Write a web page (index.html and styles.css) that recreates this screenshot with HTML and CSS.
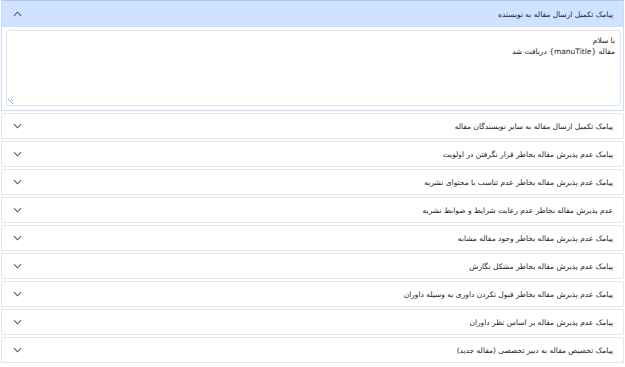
FILE: index.html
```html
<!DOCTYPE html>
<html lang="fa" dir="rtl">
<head>
<meta charset="utf-8">
<link rel="stylesheet" href="styles.css">
</head>
<body>
<div class="accordion">
  <div class="item open">
    <div class="head">
      <span class="title">پیامک تکمیل ارسال مقاله به نویسنده</span>
      <svg class="chev" viewBox="0 0 10 6" width="9" height="6"><path d="M1 5 L5 1 L9 5" fill="none" stroke="#3d5a80" stroke-width="1.2"/></svg>
    </div>
    <div class="body">
      <div class="textarea">با سلام<br>مقاله {manuTitle} دریافت شد<span class="grip"></span></div>
    </div>
  </div>
  <div class="item"><div class="head"><span class="title">پیامک تکمیل ارسال مقاله به سایر نویسندگان مقاله</span><svg class="chev" viewBox="0 0 10 6" width="9" height="6"><path d="M1 1 L5 5 L9 1" fill="none" stroke="#555" stroke-width="1.2"/></svg></div></div>
  <div class="item"><div class="head"><span class="title">پیامک عدم پذیرش مقاله بخاطر قرار نگرفتن در اولویت</span><svg class="chev" viewBox="0 0 10 6" width="9" height="6"><path d="M1 1 L5 5 L9 1" fill="none" stroke="#555" stroke-width="1.2"/></svg></div></div>
  <div class="item"><div class="head"><span class="title">پیامک عدم پذیرش مقاله بخاطر عدم تناسب با محتوای نشریه</span><svg class="chev" viewBox="0 0 10 6" width="9" height="6"><path d="M1 1 L5 5 L9 1" fill="none" stroke="#555" stroke-width="1.2"/></svg></div></div>
  <div class="item"><div class="head"><span class="title">عدم پذیرش مقاله بخاطر عدم رعایت شرایط و ضوابط نشریه</span><svg class="chev" viewBox="0 0 10 6" width="9" height="6"><path d="M1 1 L5 5 L9 1" fill="none" stroke="#555" stroke-width="1.2"/></svg></div></div>
  <div class="item"><div class="head"><span class="title">پیامک عدم پذیرش مقاله بخاطر وجود مقاله مشابه</span><svg class="chev" viewBox="0 0 10 6" width="9" height="6"><path d="M1 1 L5 5 L9 1" fill="none" stroke="#555" stroke-width="1.2"/></svg></div></div>
  <div class="item"><div class="head"><span class="title">پیامک عدم پذیرش مقاله بخاطر مشکل نگارش</span><svg class="chev" viewBox="0 0 10 6" width="9" height="6"><path d="M1 1 L5 5 L9 1" fill="none" stroke="#555" stroke-width="1.2"/></svg></div></div>
  <div class="item"><div class="head"><span class="title">پیامک عدم پذیرش مقاله بخاطر قبول نکردن داوری به وسیله داوران</span><svg class="chev" viewBox="0 0 10 6" width="9" height="6"><path d="M1 1 L5 5 L9 1" fill="none" stroke="#555" stroke-width="1.2"/></svg></div></div>
  <div class="item"><div class="head"><span class="title">پیامک عدم پذیرش مقاله بر اساس نظر داوران</span><svg class="chev" viewBox="0 0 10 6" width="9" height="6"><path d="M1 1 L5 5 L9 1" fill="none" stroke="#555" stroke-width="1.2"/></svg></div></div>
  <div class="item"><div class="head"><span class="title">پیامک تخصیص مقاله به دبیر تخصصی (مقاله جدید)</span><svg class="chev" viewBox="0 0 10 6" width="9" height="6"><path d="M1 1 L5 5 L9 1" fill="none" stroke="#555" stroke-width="1.2"/></svg></div></div>
</div>
</body>
</html>
```
FILE: styles.css
```css
html, body {
  margin: 0;
  padding: 0;
  background: #fff;
}
body {
  font-family: "DejaVu Sans", sans-serif;
  font-size: 7.5px;
  color: #1e1e1e;
}
.accordion {
  display: flex;
  flex-direction: column;
  gap: 2px;
  padding: 0 1px;
}
.item {
  border: 1px solid #e3e6ea;
  background: #fff;
}
.head {
  height: 24px;
  display: flex;
  align-items: center;
  justify-content: space-between;
  padding: 0 10px 0 11px;
}
.item.open {
  border-color: #c9dcf5;
  border-top-color: #a9c8f3;
}
.item.open .head {
  background: #cfe2ff;
  height: 26px;
  color: #0d2a55;
}
.body {
  padding: 3px 2px 4px 4px;
}
.textarea {
  position: relative;
  height: 66px;
  border: 1px solid #dee2e6;
  border-radius: 3px;
  padding: 4px 5px;
  line-height: 11px;
  font-size: 7.5px;
}
.grip {
  position: absolute;
  left: 1px;
  bottom: 1px;
  width: 5px;
  height: 5px;
  background: linear-gradient(45deg, transparent 40%, #aaa 40%, #aaa 50%, transparent 50%, transparent 70%, #aaa 70%, #aaa 80%, transparent 80%);
}
```
